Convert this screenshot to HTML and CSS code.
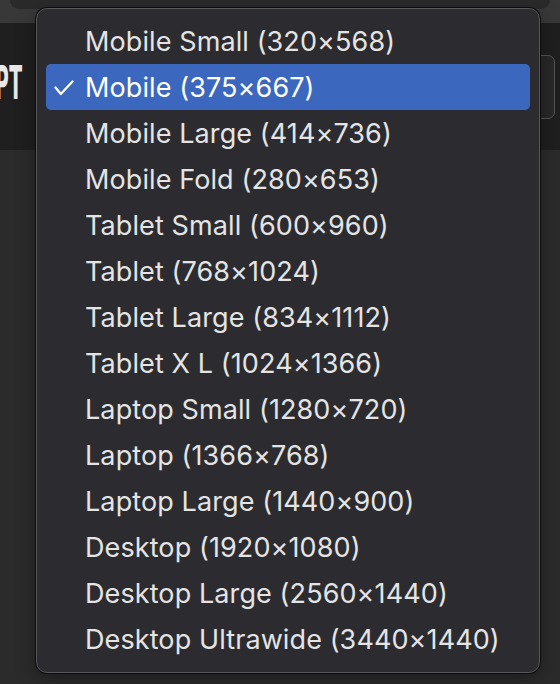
FILE: index.html
```html
<!DOCTYPE html>
<html>
<head>
<meta charset="utf-8">
<link rel="stylesheet" href="styles.css">
</head>
<body>
<div class="page">
  <div class="topbar"><div class="topbar-tab"></div></div>
  <div class="toolbar">
    <div class="title">PT</div>
    <div class="select"><span class="select-chev"></span></div>
  </div>
  <div class="content"></div>
</div>
<div class="menu">
  <div class="item">Mobile Small (320×568)</div>
  <div class="item selected"><svg class="check" width="20" height="16" viewBox="0 0 20 16"><path d="M1.5 7.5 L6.8 14 L18.5 1.5" fill="none" stroke="#ffffff" stroke-width="2.2" stroke-linecap="round" stroke-linejoin="round"/></svg>Mobile (375×667)</div>
  <div class="item">Mobile Large (414×736)</div>
  <div class="item">Mobile Fold (280×653)</div>
  <div class="item">Tablet Small (600×960)</div>
  <div class="item">Tablet (768×1024)</div>
  <div class="item">Tablet Large (834×1112)</div>
  <div class="item">Tablet X L (1024×1366)</div>
  <div class="item">Laptop Small (1280×720)</div>
  <div class="item">Laptop (1366×768)</div>
  <div class="item">Laptop Large (1440×900)</div>
  <div class="item">Desktop (1920×1080)</div>
  <div class="item">Desktop Large (2560×1440)</div>
  <div class="item">Desktop Ultrawide (3440×1440)</div>
</div>
</body>
</html>
```
FILE: styles.css
```css
html, body {
  margin: 0;
  padding: 0;
  width: 560px;
  height: 684px;
  overflow: hidden;
  background: #2b2b2b;
  font-family: "Inter", "Liberation Sans", sans-serif;
}
.page {
  display: flex;
  flex-direction: column;
  height: 684px;
}
.topbar {
  height: 23px;
  background: #383838;
  display: flex;
  padding: 0 10px;
}
.topbar-tab {
  flex: 1;
  height: 9px;
  background: #2a2a2a;
  border-radius: 0 0 12px 12px;
}
.toolbar {
  height: 127px;
  background: #1f1f1f;
  display: flex;
  align-items: flex-start;
  justify-content: space-between;
}
.title {
  margin-top: 36px;
  margin-left: -5px;
  font-family: "DejaVu Sans", sans-serif;
  font-weight: 700;
  font-size: 47px;
  line-height: 47px;
  color: #e9e9e9;
  transform: scaleX(0.4);
  transform-origin: left center;
  letter-spacing: 1px;
}
.select {
  margin-top: 32px;
  margin-right: 5px;
  width: 30px;
  height: 62px;
  border: 1px solid #555555;
  border-radius: 7px;
  background: #282828;
  position: relative;
}
.select-chev {
  position: absolute;
  left: 4px;
  top: 27px;
  width: 2px;
  height: 8px;
  background: #e0e0e0;
  transform: rotate(45deg);
}
.content {
  flex: 1;
  background: #2b2b2b;
}
.menu {
  position: absolute;
  left: 36px;
  top: 8px;
  width: 484px;
  height: 646px;
  padding: 9px 9px 8px 9px;
  background: #2c2c30;
  border: 1px solid #58585c;
  border-radius: 11px;
  box-shadow: 0 0 0 1px #0c0c0c, 0 6px 20px rgba(0,0,0,0.35);
  display: flex;
  flex-direction: column;
}
.item {
  height: 46px;
  flex: none;
  display: flex;
  align-items: center;
  padding-left: 39px;
  position: relative;
  font-size: 27px;
  letter-spacing: 0.1px;
  color: #e4e4e4;
  border-radius: 5px;
  white-space: nowrap;
}
.item.selected {
  background: #3b68be;
  color: #ffffff;
}
.check {
  position: absolute;
  left: 8px;
  top: 16px;
}
```
